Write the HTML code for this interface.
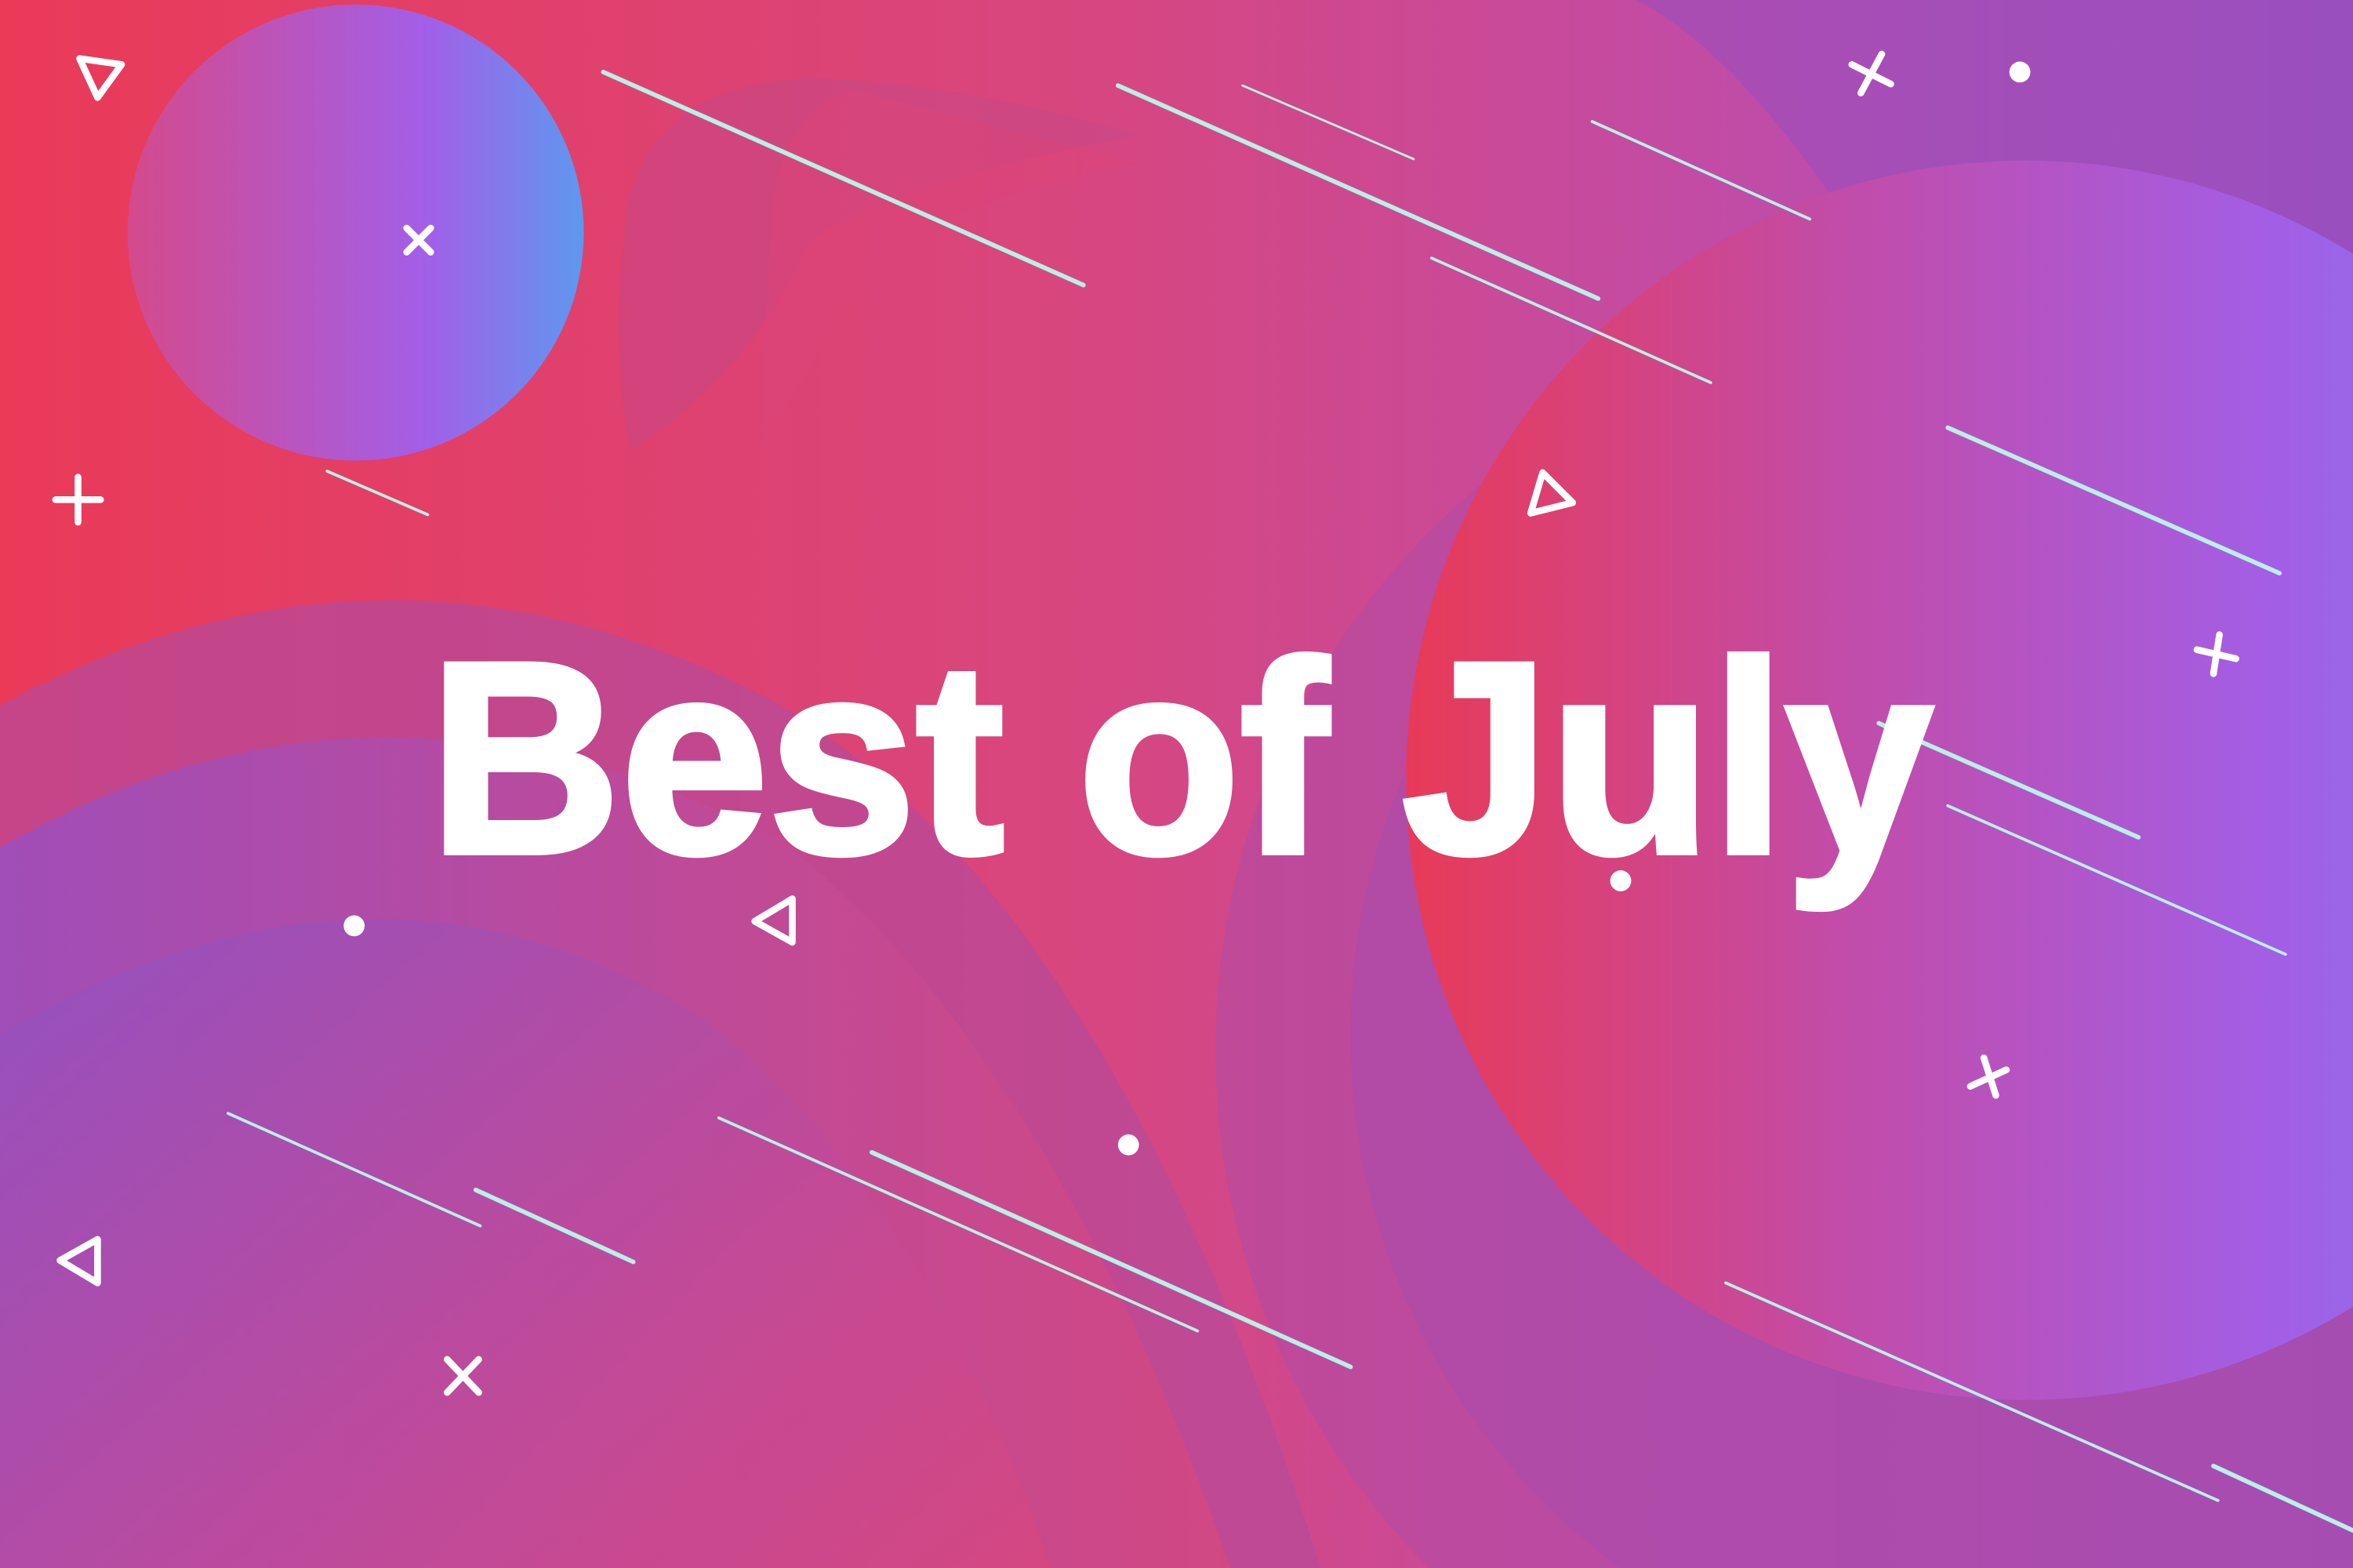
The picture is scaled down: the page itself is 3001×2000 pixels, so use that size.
<!DOCTYPE html>
<html><head><meta charset="utf-8"><style>
html,body{margin:0;padding:0;width:3001px;height:2000px;overflow:hidden}
svg{position:absolute;left:0;top:0;display:block}
</style></head><body>
<svg width="3001" height="2000" viewBox="0 0 1568 1045" preserveAspectRatio="none" xmlns="http://www.w3.org/2000/svg">
<defs>
<linearGradient id="bg" x1="0" y1="0" x2="1" y2="0">
<stop offset="0" stop-color="#ea3a58"/><stop offset="0.45" stop-color="#d8467e"/><stop offset="0.75" stop-color="#c04ca8"/><stop offset="1" stop-color="#9a52c4"/></linearGradient>
<linearGradient id="c1" x1="0" y1="0" x2="1" y2="0">
<stop offset="0" stop-color="#d44a8c"/><stop offset="0.65" stop-color="#a35ee8"/><stop offset="1" stop-color="#5e98ee"/></linearGradient>
<linearGradient id="c2" x1="0" y1="0" x2="1" y2="0">
<stop offset="0" stop-color="#e83a58"/><stop offset="0.35" stop-color="#c24ca8"/><stop offset="0.7" stop-color="#a35ee6"/><stop offset="1" stop-color="#7c80ec"/></linearGradient>
<linearGradient id="w1" x1="0" y1="0" x2="1" y2="0">
<stop offset="0" stop-color="#9a4fc0"/><stop offset="0.6" stop-color="#c04a98"/><stop offset="1" stop-color="#d44880"/></linearGradient>
<linearGradient id="w2" x1="0" y1="0" x2="1" y2="1">
<stop offset="0" stop-color="#8e52c4"/><stop offset="0.6" stop-color="#c24a98"/><stop offset="1" stop-color="#d8467e"/></linearGradient>
</defs>
<rect width="1568" height="1045" fill="url(#bg)"/>
<path d="M1090 0 L1568 0 L1568 170 Q1400 80 1220 130 Q1150 30 1090 0Z" fill="#9a4fbc" opacity="0.6"/>
<path d="M420 130 Q440 55 540 52 Q640 55 760 90 Q600 120 540 160 Q500 250 420 300 Q405 220 420 130Z" fill="#c44a8a" opacity="0.45"/>
<path d="M515 130 Q530 65 570 60 L760 110 Q620 130 560 200 Q530 270 505 300 Z" fill="#dc4478" opacity="0.5"/>
<path d="M0 470 Q260 330 520 470 Q740 600 880 1045 L0 1045Z" fill="#b84a98" opacity="0.75"/>
<path d="M0 565 Q250 420 520 560 Q700 700 820 1045 L0 1045Z" fill="url(#w1)" opacity="0.85"/>
<path d="M0 690 Q250 540 470 680 Q620 800 700 1045 L0 1045Z" fill="url(#w2)" opacity="0.7"/>
<circle cx="1300" cy="700" r="490" fill="#b04aa6" opacity="0.55"/>
<circle cx="1340" cy="690" r="440" fill="#a54cb0" opacity="0.5"/>
<circle cx="237" cy="155" r="152" fill="url(#c1)"/>
<circle cx="1350" cy="520" r="413" fill="url(#c2)"/>
<g stroke="#b8f0e6" stroke-linecap="round">
<line x1="402" y1="48" x2="722" y2="190" stroke-width="3"/>
<line x1="745" y1="57" x2="1065" y2="199" stroke-width="3"/>
<line x1="828" y1="57" x2="942" y2="106" stroke-width="1.5"/>
<line x1="1061" y1="81" x2="1206" y2="146" stroke-width="2"/>
<line x1="954" y1="172" x2="1140" y2="255" stroke-width="2"/>
<line x1="218" y1="314" x2="285" y2="343" stroke-width="2"/>
<line x1="1298" y1="285" x2="1519" y2="382" stroke-width="3"/>
<line x1="1252" y1="482" x2="1425" y2="558" stroke-width="3"/>
<line x1="1298" y1="537" x2="1523" y2="636" stroke-width="2"/>
<line x1="152" y1="742" x2="320" y2="817" stroke-width="2"/>
<line x1="317" y1="793" x2="422" y2="841" stroke-width="3"/>
<line x1="479" y1="745" x2="798" y2="887" stroke-width="2"/>
<line x1="581" y1="768" x2="900" y2="911" stroke-width="3"/>
<line x1="1150" y1="855" x2="1478" y2="1000" stroke-width="2"/>
<line x1="1475" y1="977" x2="1568" y2="1020" stroke-width="3"/>
</g>
<g fill="#fff"><circle cx="1346" cy="48" r="7"/><circle cx="236" cy="617" r="7"/><circle cx="752" cy="763" r="7"/><circle cx="1080" cy="587" r="7"/></g>
<g stroke="#fff" stroke-width="4.5" stroke-linecap="round" stroke-linejoin="round" fill="none">
<path d="M1234 43 L1260 56 M1254 36 L1240 62"/>
<path d="M271 152 L287 168 M287 152 L271 168"/>
<path d="M52 318 V348 M37 333 H67"/>
<path d="M1479 423 L1475 449 M1464 433 L1490 439"/>
<path d="M1322 705 L1330 730 M1313 724 L1337 713"/>
<path d="M298 906 L319 928 M319 906 L298 928"/>
<path d="M53 39 L81 43 L65 65Z"/>
<path d="M1028 315 L1048 335 L1020 342Z"/>
<path d="M528 599 L528 628 L503 614Z"/>
<path d="M65 826 L65 855 L40 840Z"/>
</g>
<text x="286" y="568" font-family="Liberation Sans, sans-serif" font-weight="bold" font-size="182" fill="#fff" stroke="#fff" stroke-width="4" textLength="1002" lengthAdjust="spacingAndGlyphs">Best of July</text>
</svg>
</body></html>
